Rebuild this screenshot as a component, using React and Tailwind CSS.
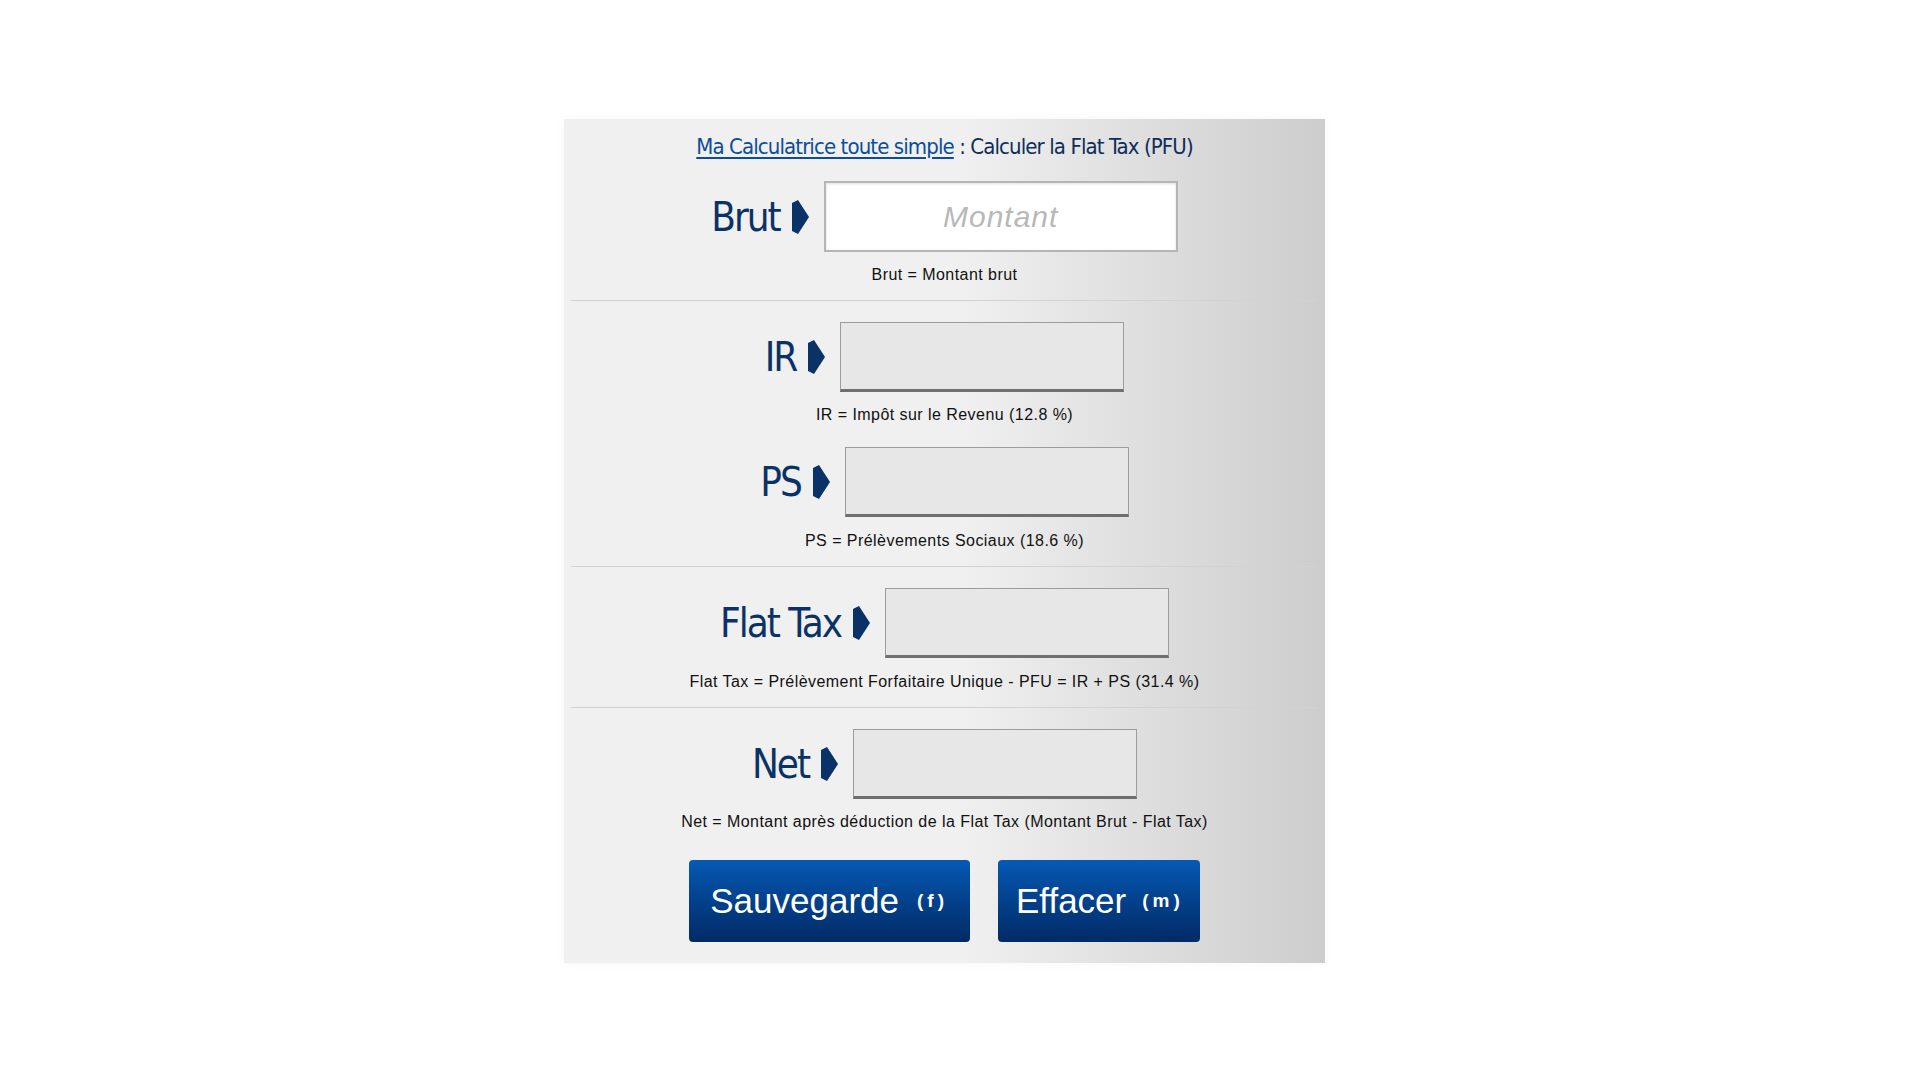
import React from 'react'

const narrow = { fontFamily: '"DejaVu Sans Condensed", "DejaVu Sans", "Liberation Sans", sans-serif' }
const plain = { fontFamily: '"Liberation Sans", Arial, sans-serif' }

function Arrow() {
  return (
    <svg width="17" height="34" viewBox="0 0 17 34" className="shrink-0">
      <polygon points="0,3 6,0 17,17 6,34 0,31" fill="#0a3266" />
    </svg>
  )
}

function Row({ label, white, placeholder }) {
  return (
    <div className="flex items-center justify-center">
      <span className="text-[40px] leading-none tracking-[-2px] text-[#0a3266] mr-3" style={narrow}>
        {label}
      </span>
      <Arrow />
      {white ? (
        <div className="ml-[15px] w-[354px] h-[71px] bg-white border-2 border-[#b5b5b5] shadow-[inset_0_1px_3px_rgba(0,0,0,0.12)] flex items-center justify-center">
          <span className="text-[30px] italic text-[#b8b8b8] tracking-[1px]" style={plain}>
            {placeholder}
          </span>
        </div>
      ) : (
        <div className="ml-[15px] w-[284px] h-[70px] bg-[#e7e7e7] border border-[#9c9c9c] border-b-[3px] border-b-[#6f6f6f]" />
      )}
    </div>
  )
}

function Caption({ children, className = '' }) {
  return (
    <p className={`text-center text-[16px] leading-[20px] tracking-[0.45px] text-[#111] ${className}`} style={plain}>
      {children}
    </p>
  )
}

function Sep({ className = '' }) {
  return <div className={`mx-[7px] h-px bg-[#d2d2d2] ${className}`} />
}

export default function App() {
  return (
    <div className="min-h-screen bg-white pt-[119px]">
      <div className="ml-[564px] w-[761px] pb-[21px] pt-[14px] bg-[linear-gradient(to_right,#f0f0f0_52%,#cdcdcd)] shadow-[0_0_10px_rgba(0,0,0,0.04)]">
        <h1 className="text-center text-[22px] leading-[28px] tracking-[-0.9px] text-[#0f2d5a]" style={narrow}>
          <a href="#" className="text-[#0b4d9b] underline underline-offset-[3px]">
            Ma Calculatrice toute simple
          </a>{' '}
          : Calculer la Flat Tax (PFU)
        </h1>

        <div className="mt-[20px]">
          <Row label="Brut" white placeholder="Montant" />
        </div>
        <Caption className="mt-[13px]">Brut = Montant brut</Caption>
        <Sep className="mt-[15px]" />

        <div className="mt-[21px]">
          <Row label="IR" />
        </div>
        <Caption className="mt-[13px]">IR = Impôt sur le Revenu (12.8 %)</Caption>
        <div className="mt-[22px]">
          <Row label="PS" />
        </div>
        <Caption className="mt-[14px]">PS = Prélèvements Sociaux (18.6 %)</Caption>
        <Sep className="mt-[15px]" />

        <div className="mt-[21px]">
          <Row label="Flat Tax" />
        </div>
        <Caption className="mt-[14px]">Flat Tax = Prélèvement Forfaitaire Unique - PFU = IR + PS (31.4 %)</Caption>
        <Sep className="mt-[15px]" />

        <div className="mt-[21px]">
          <Row label="Net" />
        </div>
        <Caption className="mt-[13px]">Net = Montant après déduction de la Flat Tax (Montant Brut - Flat Tax)</Caption>

        <div className="mt-[28px] flex justify-center gap-[28px]">
          <button className="h-[82px] pl-[21px] pr-[22px] rounded-[4px] bg-gradient-to-b from-[#0659b4] to-[#012a66] text-white flex items-center" style={plain}>
            <span className="text-[35px]">Sauvegarde</span>
            <span className="ml-[18px] text-[19px] font-bold tracking-[4px]">(f)</span>
          </button>
          <button className="h-[82px] pl-[18px] pr-[16px] rounded-[4px] bg-gradient-to-b from-[#0659b4] to-[#012a66] text-white flex items-center" style={plain}>
            <span className="text-[35px]">Effacer</span>
            <span className="ml-[16px] text-[19px] font-bold tracking-[4px]">(m)</span>
          </button>
        </div>
      </div>
    </div>
  )
}
